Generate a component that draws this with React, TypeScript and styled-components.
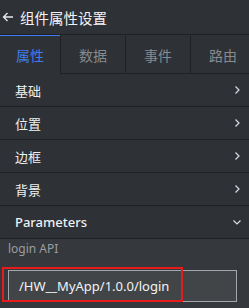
import React from 'react';
import styled, { createGlobalStyle } from 'styled-components';

const GlobalStyle = createGlobalStyle`
  html, body {
    margin: 0;
    padding: 0;
    background: #2e3135;
  }
  body {
    font-family: "Noto Sans", "Noto Sans CJK SC", sans-serif;
  }
`;

const Panel = styled.div`
  width: 249px;
  height: 308px;
  overflow: hidden;
  background: #2e3135;
  color: #e8eaed;
`;

const Header = styled.div`
  height: 34px;
  display: flex;
  align-items: center;
  gap: 6px;
  padding-left: 2px;
  font-size: 14.5px;
  color: #f2f3f5;
  border-bottom: 1px solid #1f2124;
`;

const Tabs = styled.div`
  display: flex;
  height: 39px;
  overflow: hidden;
`;

const Tab = styled.div<{ $active?: boolean; $w: number }>`
  flex: 0 0 ${({ $w }) => $w}px;
  box-sizing: border-box;
  display: flex;
  align-items: center;
  justify-content: center;
  font-size: 14px;
  color: ${({ $active }) => ($active ? '#3f7cf2' : '#878a8e')};
  border-top: 1px solid ${({ $active }) => ($active ? '#3f7cf2' : 'transparent')};
  border-left: ${({ $active }) => ($active ? 'none' : '1px solid #1f2124')};
  border-bottom: ${({ $active }) => ($active ? 'none' : '1px solid #1f2124')};
  background: #2e3135;
`;

const Row = styled.div`
  height: 33px;
  box-sizing: border-box;
  display: flex;
  align-items: center;
  justify-content: space-between;
  padding: 0 7px 0 15px;
  font-size: 13px;
  color: #eef0f2;
  border-bottom: 1px solid #1f2124;
`;

const RowTitle = styled.span<{ $strong?: boolean }>`
  font-weight: ${({ $strong }) => ($strong ? 500 : 400)};
`;

const Section = styled.div`
  background: #35383c;
  padding: 1px 12px 0 8px;
  height: 80px;
`;

const Label = styled.div`
  font-size: 12px;
  color: #9a9da2;
  margin-bottom: 13px;
`;

const InputWrap = styled.div`
  position: relative;
`;

const Input = styled.div`
  box-sizing: border-box;
  height: 32px;
  display: flex;
  align-items: center;
  padding-left: 10px;
  background: #414548;
  border: 1px solid #a3a7ab;
  font-size: 13px;
  color: #f2f3f5;
`;

const Highlight = styled.div`
  position: absolute;
  left: -6px;
  top: -3px;
  width: 177px;
  height: 31px;
  border: 2px solid #e51c1c;
  pointer-events: none;
`;

const Chevron: React.FC<{ down?: boolean }> = ({ down }) => (
  <svg width="10" height="10" viewBox="0 0 10 10" fill="none" stroke="#d8dde4" strokeWidth="1.2">
    {down ? <path d="M1.5 3.5 L5 7 L8.5 3.5" /> : <path d="M3.5 1.5 L7 5 L3.5 8.5" />}
  </svg>
);

const tabs = [
  { label: '属性', w: 60, active: true },
  { label: '数据', w: 65 },
  { label: '事件', w: 65 },
  { label: '路由', w: 65 },
];

const groups = ['基础', '位置', '边框', '背景'];

export default function App() {
  return (
    <Panel>
      <GlobalStyle />
      <Header>
        <svg width="12" height="12" viewBox="0 0 12 12" fill="none" stroke="#e8eaed" strokeWidth="1.3">
          <path d="M11 6 H1.5 M5.5 2 L1.5 6 L5.5 10" />
        </svg>
        组件属性设置
      </Header>
      <Tabs>
        {tabs.map((t) => (
          <Tab key={t.label} $w={t.w} $active={t.active}>
            {t.label}
          </Tab>
        ))}
      </Tabs>
      {groups.map((g) => (
        <Row key={g}>
          <RowTitle>{g}</RowTitle>
          <Chevron />
        </Row>
      ))}
      <Row>
        <RowTitle $strong>Parameters</RowTitle>
        <Chevron down />
      </Row>
      <Section>
        <Label>login API</Label>
        <InputWrap>
          <Input>/HW__MyApp/1.0.0/login</Input>
          <Highlight />
        </InputWrap>
      </Section>
    </Panel>
  );
}
